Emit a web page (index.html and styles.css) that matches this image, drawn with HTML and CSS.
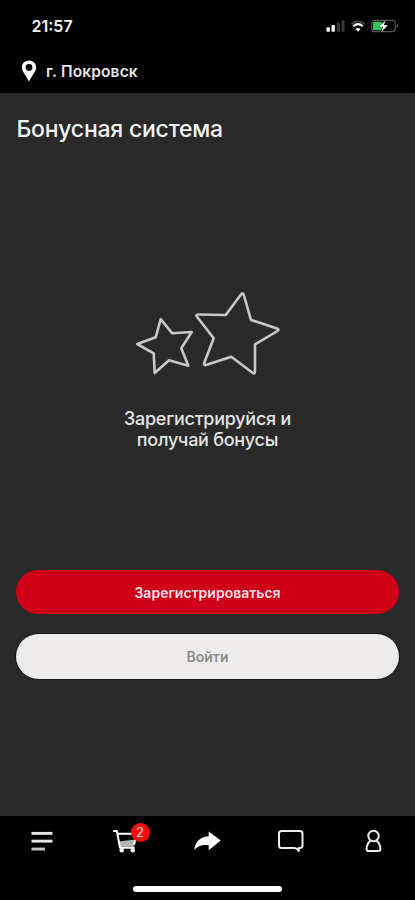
FILE: index.html
```html
<!DOCTYPE html>
<html lang="ru">
<head>
<meta charset="utf-8">
<title>Бонусная система</title>
<link rel="stylesheet" href="styles.css">
</head>
<body>
<div class="app">
  <header class="header">
    <div class="status">
      <span class="time">21:57</span>
      <svg class="indicators" width="74" height="16" viewBox="0 0 74 16">
        <g fill="#fff"><rect x="1.5" y="9.3" width="3.4" height="4.4" rx=".8"/><rect x="6.5" y="7" width="3.4" height="6.7" rx=".8"/></g>
        <g fill="#3a3a3a"><rect x="11.8" y="4.8" width="3" height="8.9" rx=".8"/><rect x="16.6" y="2.6" width="3" height="11.1" rx=".8"/></g>
        <path d="M26.3 6.2Q33 .4 39.7 6.2" fill="none" stroke="#444" stroke-width="1.8"/>
        <path d="M28.3 8.2Q33 4.2 37.7 8.2" fill="none" stroke="#fff" stroke-width="2.1"/>
        <path d="M30.4 10.9Q33 8.9 35.6 10.9L33 13.7Z" fill="#fff"/>
        <rect x="46.7" y="2.4" width="23.6" height="11.2" rx="3" fill="none" stroke="#555" stroke-width="1.2"/>
        <path d="M71.8 6v4q1.6-.5 1.6-2t-1.6-2Z" fill="#555"/>
        <rect x="48" y="3.7" width="9" height="8.6" rx="1.5" fill="#35c759"/>
        <path d="M61 1.4L53.6 9h4l-1.8 6 7.4-8h-4Z" fill="#fff" stroke="#000" stroke-width=".4"/>
      </svg>
    </div>
    <div class="location">
      <svg width="16" height="22" viewBox="0 0 16 22"><path fill="#fff" fill-rule="evenodd" d="M8 .4C3.8.4.8 3.5.8 7.5c0 3.6 3.4 6.7 7.2 14 3.8-7.3 7.2-10.4 7.2-14C15.2 3.5 12.2.4 8 .4ZM8 4a3.4 3.4 0 1 1 0 6.8A3.4 3.4 0 0 1 8 4Z"/></svg>
      <span class="city">г. Покровск</span>
    </div>
  </header>
  <main class="main">
    <h1 class="title">Бонусная система</h1>
    <section class="promo">
      <svg class="stars" width="156" height="95" viewBox="130 285 156 95" fill="none" stroke="#c8c8c8" stroke-width="2.6" stroke-linejoin="round">
        <path d="M160.7 319.2L172.3 333.3 191.7 332 181.3 348.3 188.3 365.7 169 360.3 154.7 373 153.7 353.3 137.2 344 155.7 337.3Z"/>
        <path d="M241 294.5Q242.8 292 243.8 295L251 320 277 328.5Q279.5 329.5 277.5 331L255 344.3V371.5Q254.8 374.5 252.5 372.8L231.3 356.7 206 365Q203.3 365.5 204.3 362.8L213.7 338.3 197 316.8Q195.5 314.5 198.3 314.5L225.7 315Z"/>
      </svg>
      <p class="promo-text"><span class="line">Зарегистрируйся и</span><span class="line">получай бонусы</span></p>
    </section>
    <div class="actions">
      <button class="button primary"><span>Зарегистрироваться</span></button>
      <button class="button secondary"><span>Войти</span></button>
    </div>
  </main>
  <footer class="footer">
    <nav class="nav">
      <a class="item"><svg width="28" height="28" viewBox="0 0 28 28" fill="#e6e6e6"><rect x="4.5" y="4.9" width="21" height="2.9"/><rect x="4.5" y="12.7" width="21" height="2.9"/><rect x="4.5" y="20.6" width="13.5" height="2.9" fill="#c4c4c4"/></svg></a>
      <a class="item"><svg width="28" height="28" viewBox="-.7 0 28 28">
        <path d="M7.5 14.5L25 12.5 23.3 19.8H9Z" fill="#b5b5b5"/>
        <path d="M2.5 4.1H6.2L9.3 20.7H24M7 6.7H25.5L23.5 17.5" fill="none" stroke="#fff" stroke-width="2" stroke-linejoin="round"/>
        <circle cx="11" cy="23.3" r="2.2" fill="#fff"/><circle cx="22" cy="23.3" r="2.2" fill="#fff"/></svg><span class="badge">2</span></a>
      <a class="item"><svg width="28" height="28" viewBox="-.5 0 28 28"><path d="M15.2 4.5L27.2 13.6 15.2 23.3V18.2C9 17.3 4.5 18.5.8 23 1.5 14.5 7.5 9.7 15.2 9.3Z" fill="#fff"/></svg></a>
      <a class="item"><svg width="28" height="28" viewBox="-.5 0 28 28"><path d="M5 4H23.5Q26 4 26 6.5V18.5Q26 21 23.5 21H22.3V24Q20.8 21 17.5 21H5Q2.5 21 2.5 18.5V6.5Q2.5 4 5 4Z" fill="none" stroke="#eee" stroke-width="2" stroke-linejoin="round"/></svg></a>
      <a class="item"><svg width="28" height="28" viewBox="-.5 0 28 28" fill="none" stroke="#e8e8e8" stroke-width="2"><circle cx="14" cy="9" r="5.2"/><path d="M11.2 13.6C8 15.5 7.3 18.3 7.1 22Q7.1 24.1 9.2 24.1H18.8Q20.9 24.1 20.9 22C20.7 18.3 20 15.5 16.8 13.6"/></svg></a>
    </nav>
    <div class="home"></div>
  </footer>
</div>
</body>
</html>
```
FILE: styles.css
```css
* { box-sizing: border-box; }
body { margin: 0; background: #000; font-family: Inter, "Liberation Sans", sans-serif; color: #f2f2f2; }
.app { width: 415px; height: 900px; display: flex; flex-direction: column; overflow: hidden; }
.header { height: 93px; background: #000; }
.status { height: 52px; padding: 0 16px 0 31.5px; display: flex; align-items: center; justify-content: space-between; }
.time { font-size: 16px; font-weight: 600; line-height: 20px; }
.location { height: 38px; padding-left: 21px; display: flex; align-items: center; gap: 9px; }
.city { padding-top: 1px; font-size: 15.5px; font-weight: 600; line-height: 20px; letter-spacing: .15px; white-space: nowrap; color: #e6e6e6; }
.main { height: 723px; background: #292929; display: flex; flex-direction: column; }
.title { margin: 21px 0 0 16.4px; height: 30px; font-size: 23px; font-weight: 500; line-height: 30px; letter-spacing: -.23px; white-space: nowrap; }
.promo { margin-top: 141px; display: flex; flex-direction: column; align-items: center; }
.stars { display: block; }
.promo-text { margin: 28px 0 0; text-align: center; font-size: 18px; font-weight: 500; line-height: 21px; letter-spacing: -.27px; color: #e4e4e4; }
.line { display: block; white-space: nowrap; }
.actions { margin-top: 120px; padding: 0 16px; display: grid; gap: 20px; }
.button { height: 44px; width: 100%; border: 0; border-radius: 23px; padding: 2px 0 0; font-family: inherit; font-size: 14px; font-weight: 600; line-height: 20px; }
.primary { background: #d00019; color: #f8dfe2; }
.secondary { height: 44.5px; background: #edecea; color: #8b8b8b; box-shadow: 0 0 0 1px #191919; }
.footer { height: 84px; background: #000; display: flex; flex-direction: column; align-items: center; }
.nav { width: 415px; height: 70px; padding-top: 11px; display: grid; grid-template-columns: repeat(5, 1fr); }
.item { position: relative; height: 28px; padding-right: 1px; display: flex; justify-content: center; }
.badge { position: absolute; left: 47.5px; top: -4.5px; width: 19px; height: 19px; border-radius: 50%; background: #f90b0b; color: #ffd7d7; font-size: 13px; line-height: 19px; text-align: center; }
.home { width: 149px; height: 6px; border-radius: 3px; background: #fff; }
```
